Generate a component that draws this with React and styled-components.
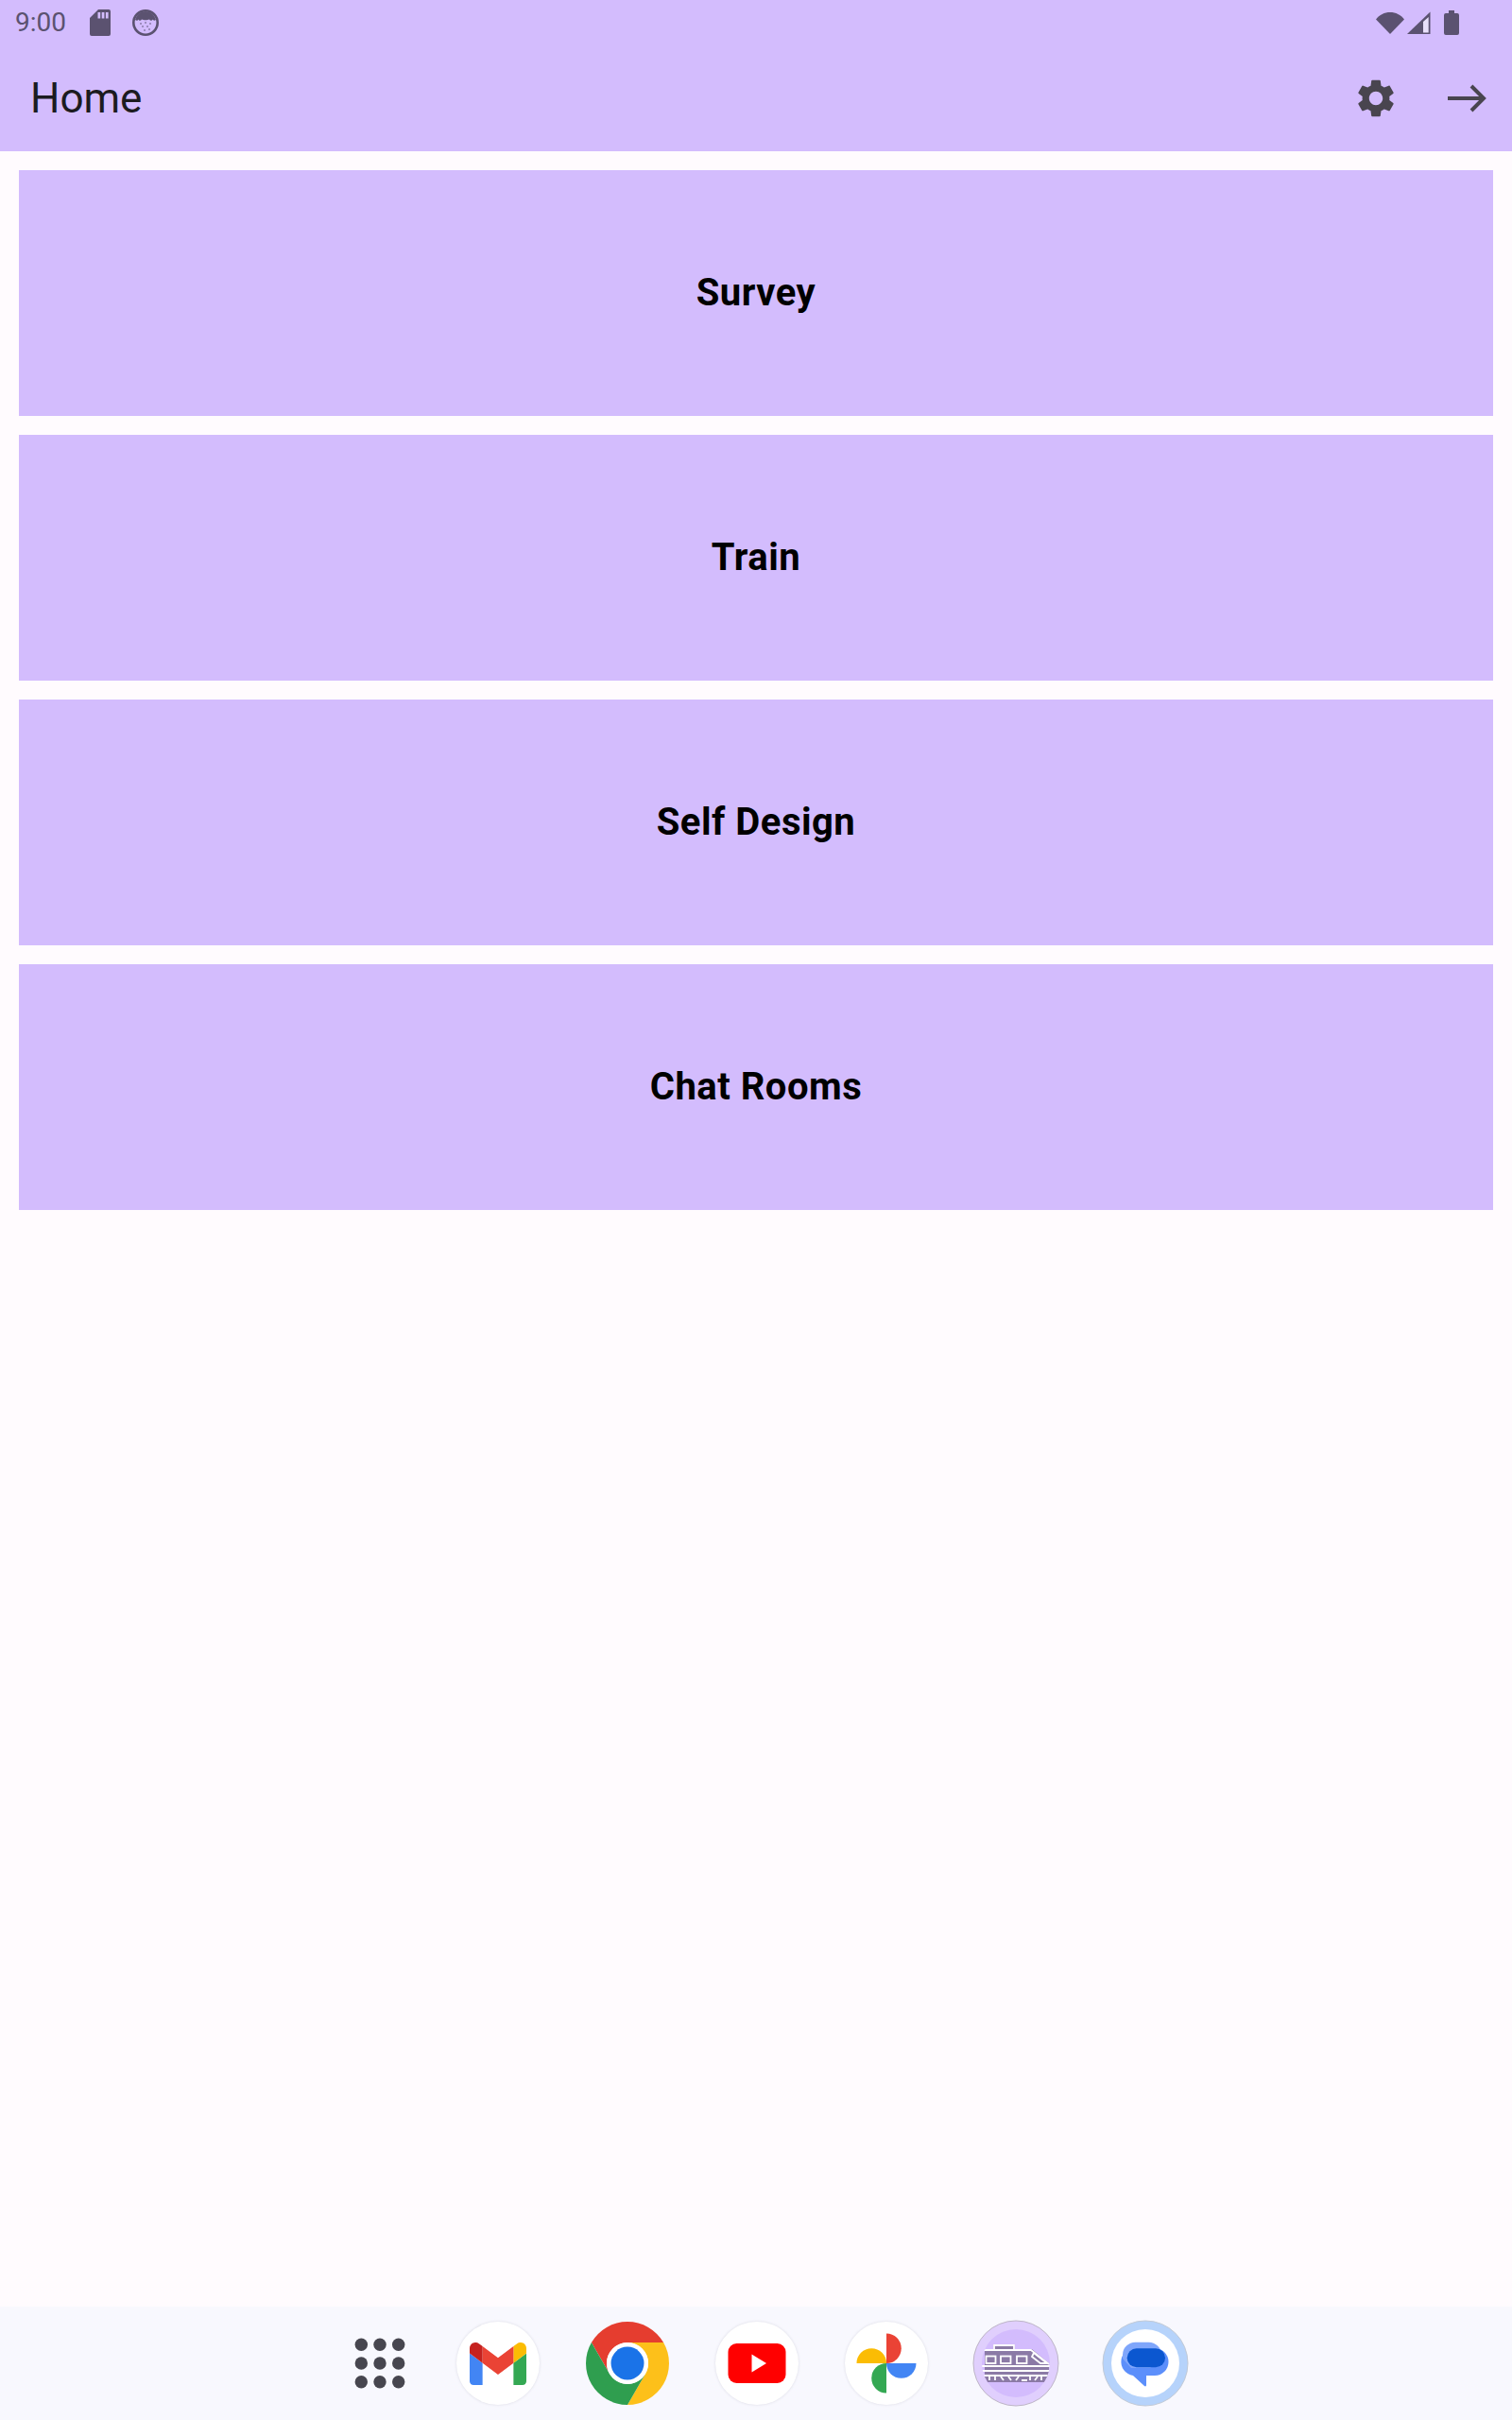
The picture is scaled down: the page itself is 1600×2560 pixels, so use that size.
import React from 'react';
import styled, { createGlobalStyle } from 'styled-components';

const GlobalStyle = createGlobalStyle`
  html, body {
    margin: 0;
    padding: 0;
    background: #fffbfe;
    font-family: Roboto, "Liberation Sans", sans-serif;
  }
`;

const Screen = styled.div`
  height: 100vh;
  display: flex;
  flex-direction: column;
  background: #fffbfe;
`;

const AppBar = styled.header`
  height: 160px;
  flex-shrink: 0;
  background: #d3bcfd;
`;

const StatusBar = styled.div`
  height: 48px;
  display: flex;
  align-items: center;
  justify-content: space-between;
  padding: 0 56px 0 16px;
  color: #5b5270;
`;

const StatusGroup = styled.div`
  display: flex;
  align-items: center;
  gap: ${(p) => p.$gap}px;
`;

const Clock = styled.span`
  font-size: 28px;
  line-height: 48px;
  margin-right: 2px;
`;

const BatterySlot = styled.span`
  display: flex;
  margin-left: 11px;
`;

const Toolbar = styled.div`
  height: 112px;
  display: flex;
  align-items: center;
  justify-content: space-between;
  padding-left: 32px;
`;

const Title = styled.h1`
  margin: 0;
  font-size: 44px;
  font-weight: 400;
  line-height: 56px;
  color: #1c1b1f;
`;

const Actions = styled.div`
  display: flex;
`;

const IconButton = styled.button`
  width: 96px;
  height: 96px;
  padding: 0;
  border: 0;
  background: none;
  display: flex;
  align-items: center;
  justify-content: center;
  color: #49454f;
`;

const Menu = styled.main`
  flex: 1;
  display: flex;
  flex-direction: column;
  gap: 20px;
  padding: 20px;
`;

const MenuCard = styled.button`
  height: 260px;
  border: 0;
  padding: 0 0 2px;
  background: #d3bcfd;
  color: #000;
  font-family: Roboto, "Liberation Sans", sans-serif;
  font-size: 40px;
  font-weight: 700;
  letter-spacing: 0.5px;
`;

const Dock = styled.nav`
  height: 120px;
  flex-shrink: 0;
  display: flex;
  align-items: center;
  justify-content: center;
  background: #f8f8fe;
`;

const AllApps = styled.div`
  width: 114px;
  display: flex;
  justify-content: center;
`;

const AppRow = styled.div`
  display: flex;
  gap: 49px;
  margin-left: 24px;
`;

const AppIcon = styled.div`
  width: 88px;
  height: 88px;
  border-radius: 50%;
  display: flex;
  align-items: center;
  justify-content: center;
  background: ${(p) => (p.$plain ? 'none' : '#fff')};
  box-shadow: ${(p) => (p.$plain ? 'none' : '0 0 3px rgba(60, 60, 90, 0.16)')};
  svg {
    flex-shrink: 0;
  }
`;

const SdCardIcon = () => (
  <svg width="22" height="28" viewBox="0 0 22 28">
    <path fill="currentColor" fillRule="evenodd" d="M9 0h11a2 2 0 0 1 2 2v24a2 2 0 0 1-2 2H2a2 2 0 0 1-2-2V9zM8.500 3v6.500h2.700V3zM12.700 3v6.500h2.700V3zM16.900 3v6.500h2.700V3z" />
  </svg>
);

const BugIcon = () => (
  <svg width="28" height="28" viewBox="0 0 28 28">
    <circle cx="14" cy="14" r="12.700" fill="none" stroke="currentColor" strokeWidth="2.600" />
    <path fill="currentColor" d="M3 11C5 5 9 2 14 2s9 3 11 9c-1.500 1-3 1-3.500-.5-1 2-2.500 1.500-3.500 0-2 1-6 1-8 0-1 1.500-2.500 2-3.500 0C6 12 4.500 12 3 11z" />
    <g fill="currentColor">
      <circle cx="9" cy="15" r="0.800" />
      <circle cx="14" cy="14" r="0.800" />
      <circle cx="19" cy="15" r="0.800" />
      <circle cx="11" cy="18" r="0.800" />
      <circle cx="16" cy="18" r="0.800" />
      <circle cx="13" cy="22" r="0.800" />
      <circle cx="18" cy="21" r="0.800" />
    </g>
  </svg>
);

const WifiIcon = () => (
  <svg width="30" height="26" viewBox="0 0 30 26">
    <path fill="currentColor" d="M0 9.500C3.800 4.500 9 2 15 2s11.200 2.500 15 7.500L15 25z" />
  </svg>
);

const SignalIcon = () => (
  <svg width="25" height="26" viewBox="0 0 25 26">
    <path fill="currentColor" d="M24.500 1.500V25H0z" />
    <path fill="#e9e0fb" d="M17 12V23.500H22.700V7z" />
  </svg>
);

const BatteryIcon = () => (
  <svg width="16" height="26" viewBox="0 0 16 26">
    <path fill="currentColor" d="M5 0h6v3h3a2 2 0 0 1 2 2v19a2 2 0 0 1-2 2H2a2 2 0 0 1-2-2V5a2 2 0 0 1 2-2h3z" />
  </svg>
);

const GearIcon = () => (
  <svg width="48" height="48" viewBox="0 0 24 24">
    <path fill="currentColor" d="M19.140 12.940c.04-.3.06-.61.06-.94 0-.32-.02-.64-.07-.94l2.030-1.580c.18-.14.23-.41.12-.61l-1.920-3.320c-.12-.22-.37-.29-.59-.22l-2.390.96c-.5-.38-1.030-.7-1.620-.94l-.36-2.540c-.04-.24-.24-.41-.48-.41h-3.840c-.24 0-.43.17-.47.41l-.36 2.540c-.59.24-1.130.57-1.620.94l-2.390-.96c-.22-.08-.47 0-.59.22L2.740 8.870c-.12.21-.08.47.12.61l2.030 1.580c-.05.3-.09.63-.09.94s.02.64.07.94l-2.030 1.580c-.18.14-.23.41-.12.61l1.920 3.320c.12.22.37.29.59.22l2.390-.96c.5.38 1.030.7 1.620.94l.36 2.540c.05.24.24.41.48.41h3.840c.24 0 .44-.17.47-.41l.36-2.540c.59-.24 1.130-.56 1.620-.94l2.390.96c.22.08.47 0 .59-.22l1.920-3.320c.12-.22.07-.47-.12-.61l-2.010-1.580zM12 15.600c-1.980 0-3.600-1.620-3.600-3.600s1.620-3.600 3.600-3.600 3.600 1.620 3.600 3.600-1.620 3.600-3.600 3.600z" />
  </svg>
);

const ArrowIcon = () => (
  <svg width="48" height="48" viewBox="0 0 24 24" fill="none" stroke="currentColor" strokeWidth="2">
    <path d="M2 12h19" />
    <path d="M14.500 5.500L21 12l-6.500 6.500" />
  </svg>
);

const AllAppsIcon = () => (
  <svg width="54" height="54" viewBox="-27 -27 54 54" fill="#47464f">
    {[-19.7, 0, 19.7].flatMap((y) =>
      [-19.7, 0, 19.7].map((x) => <circle key={`${x}${y}`} cx={x} cy={y} r="6.700" />)
    )}
  </svg>
);

const GmailIcon = () => (
  <svg width="60" height="45" viewBox="52 42 88 66">
    <path fill="#4285f4" d="M58 108h14V74L52 59v43c0 3.320 2.690 6 6 6" />
    <path fill="#34a853" d="M120 108h14c3.320 0 6-2.690 6-6V59l-20 15" />
    <path fill="#fbbc04" d="M120 48v26l20-15v-8c0-7.420-8.470-11.650-14.400-7.200" />
    <path fill="#ea4335" d="M72 74V48l24 18 24-18v26L96 92" />
    <path fill="#c5221f" d="M52 51v8l20 15V48l-5.600-4.200c-5.940-4.450-14.400-.22-14.400 7.200" />
  </svg>
);

const ChromeIcon = () => (
  <svg width="88" height="88" viewBox="-44 -44 88 88">
    <path fill="#e53d2f" d="M0-22H38.100A44 44 0 0 0-38.100-22L-19.050 11A22 22 0 0 1 0-22z" />
    <path fill="#fdc01a" d="M38.100-22A44 44 0 0 1 0 44L19.050 11A22 22 0 0 0 0-22z" />
    <path fill="#2f9e4f" d="M0 44A44 44 0 0 1-38.100-22L-19.050 11A22 22 0 0 0 19.050 11z" />
    <circle r="22" fill="#fff" />
    <circle r="17.500" fill="#1a73e8" />
  </svg>
);

const YoutubeIcon = () => (
  <svg width="88" height="88" viewBox="-44 -44 88 88">
    <rect x="-30.500" y="-21" width="61" height="42" rx="9" fill="#ff0000" />
    <path fill="#fff" d="M-5.500-9.500L10 0-5.500 9.500z" />
  </svg>
);

const PhotosIcon = () => (
  <svg width="88" height="88" viewBox="-44 -44 88 88">
    <path fill="#ea4335" d="M0-31.500A15.750 15.750 0 0 1 0 0z" />
    <path fill="#4285f4" d="M31.500 0A15.750 15.750 0 0 1 0 0z" />
    <path fill="#34a853" d="M0 31.500A15.750 15.750 0 0 1 0 0z" />
    <path fill="#fbbc04" d="M-31.500 0A15.750 15.750 0 0 1 0 0z" />
  </svg>
);

const TrainIcon = () => (
  <svg width="92" height="92" viewBox="-46 -46 92 92">
    <defs>
      <clipPath id="train-clip">
        <circle r="36" />
      </clipPath>
    </defs>
    <circle r="45" fill="#e0cffd" stroke="#bdb5c6" strokeWidth="1" />
    <circle r="36" fill="#d3bcfd" />
    <g clipPath="url(#train-clip)">
      <path fill="#8b7aa6" d="M-33-15H-24V-20H-1V-15H17L35 0V18L30 20H-33z" />
      <g fill="none" stroke="#fff" strokeWidth="1.800">
        <path d="M-23-15V-19H-2V-15" />
        <path d="M-34-14H16L35 1" />
        <rect x="-31.500" y="-7.500" width="10" height="7.500" />
        <rect x="-16" y="-7.500" width="10.500" height="7.500" />
        <rect x="1" y="-7.500" width="10.500" height="7.500" />
        <path d="M19-11L33 0H26L17-7z" />
        <path d="M-36 3H36M-36 8H36M-36 13H36" />
        <path d="M-28 14V18M-22 14V18M-16 14L-13 18M-8 14L-5 18M0 18L3 14M6 18H12M15 14V18M20 18L23 14M27 14V18" />
      </g>
    </g>
  </svg>
);

const MessagesIcon = () => (
  <svg width="92" height="92" viewBox="-46 -46 92 92">
    <circle r="45" fill="#b6d3fb" stroke="#c2cad6" strokeWidth="1" />
    <circle r="36" fill="#fff" />
    <path fill="#5c8ffb" d="M-9-16H10A14.500 14.500 0 0 1 10 13H1V23C1 24.500 0 24.700-1 24L-13 13A14.500 14.500 0 0 1-9-16z" />
    <path fill="#7fa6fb" d="M-10.500-22.300H3.500A13.500 13.500 0 0 1 17-9V-2L5 5H-15L-24-5V-9A13.500 13.500 0 0 1-10.500-22.300z" />
    <rect x="-19.300" y="-15.700" width="40.300" height="20" rx="10" fill="#0b57d0" />
  </svg>
);

const menuItems = ['Survey', 'Train', 'Self Design', 'Chat Rooms'];

export default function App() {
  return (
    <Screen>
      <GlobalStyle />
      <AppBar>
        <StatusBar>
          <StatusGroup $gap={23}>
            <Clock>9:00</Clock>
            <SdCardIcon />
            <BugIcon />
          </StatusGroup>
          <StatusGroup $gap={3}>
            <WifiIcon />
            <SignalIcon />
            <BatterySlot>
              <BatteryIcon />
            </BatterySlot>
          </StatusGroup>
        </StatusBar>
        <Toolbar>
          <Title>Home</Title>
          <Actions>
            <IconButton aria-label="Settings">
              <GearIcon />
            </IconButton>
            <IconButton aria-label="Next">
              <ArrowIcon />
            </IconButton>
          </Actions>
        </Toolbar>
      </AppBar>
      <Menu>
        {menuItems.map((item) => (
          <MenuCard key={item}>{item}</MenuCard>
        ))}
      </Menu>
      <Dock>
        <AllApps>
          <AllAppsIcon />
        </AllApps>
        <AppRow>
          <AppIcon><GmailIcon /></AppIcon>
          <AppIcon $plain><ChromeIcon /></AppIcon>
          <AppIcon><YoutubeIcon /></AppIcon>
          <AppIcon><PhotosIcon /></AppIcon>
          <AppIcon $plain><TrainIcon /></AppIcon>
          <AppIcon $plain><MessagesIcon /></AppIcon>
        </AppRow>
      </Dock>
    </Screen>
  );
}
